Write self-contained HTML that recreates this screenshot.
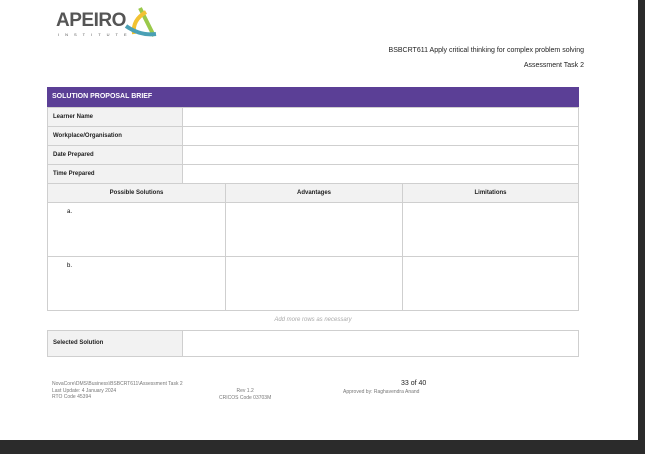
<!DOCTYPE html><html><head><style>
body{margin:0;width:645px;height:454px;background:#2b2b2b;position:relative;overflow:hidden;font-family:"Liberation Sans",sans-serif}
.page{position:absolute;left:0;top:0;width:638px;height:440px;background:#fff}
.a{position:absolute}
.t{font-size:6px;font-weight:bold;color:#222}
.b{border:1px solid #cfcfcf;box-sizing:border-box}
.g{background:#f2f2f2}
.f{font-size:5px;color:#777;line-height:6.5px}
</style></head><body><div class="page">
<div class="a" style="left:56px;top:10px;font-size:19px;font-weight:bold;color:#555;letter-spacing:-0.5px">APEIRO</div>
<div class="a" style="left:58px;top:32px;font-size:4px;color:#555;letter-spacing:6px">INSTITUTE</div>
<svg class="a" style="left:122px;top:4px" width="36" height="38" viewBox="0 0 36 38"><path d="M18 4 L32 32" stroke="#9ac94a" stroke-width="4" fill="none"/><path d="M24 8 Q10 16 12 30" stroke="#f2c232" stroke-width="4" fill="none"/><path d="M4 22 Q18 32 34 30" stroke="#4aa0b5" stroke-width="4" fill="none"/></svg>
<div class="a" style="right:54px;top:47px;font-size:7px;color:#222">BSBCRT611 Apply critical thinking for complex problem solving</div>
<div class="a" style="right:54px;top:62px;font-size:7px;color:#222">Assessment Task 2</div>
<div class="a" style="left:47px;top:87px;width:532px;height:20px;background:#5b3f96;color:#fff;font-size:7px;font-weight:bold;line-height:20px;padding-left:5px;box-sizing:border-box">SOLUTION PROPOSAL BRIEF</div>
<div class="a b g t" style="left:47px;top:107px;width:136px;height:20px;line-height:18px;padding-left:5px">Learner Name</div><div class="a b" style="left:182px;top:107px;width:397px;height:20px"></div>
<div class="a b g t" style="left:47px;top:126px;width:136px;height:20px;line-height:18px;padding-left:5px">Workplace/Organisation</div><div class="a b" style="left:182px;top:126px;width:397px;height:20px"></div>
<div class="a b g t" style="left:47px;top:145px;width:136px;height:20px;line-height:18px;padding-left:5px">Date Prepared</div><div class="a b" style="left:182px;top:145px;width:397px;height:20px"></div>
<div class="a b g t" style="left:47px;top:164px;width:136px;height:20px;line-height:18px;padding-left:5px">Time Prepared</div><div class="a b" style="left:182px;top:164px;width:397px;height:20px"></div>
<div class="a b g t" style="left:47px;top:183px;width:179px;height:20px;line-height:18px;text-align:center">Possible Solutions</div>
<div class="a b g t" style="left:225px;top:183px;width:178px;height:20px;line-height:18px;text-align:center">Advantages</div>
<div class="a b g t" style="left:402px;top:183px;width:177px;height:20px;line-height:18px;text-align:center">Limitations</div>
<div class="a b" style="left:47px;top:202px;width:179px;height:55px;font-size:6px;padding:6px 0 0 19px">a.</div>
<div class="a b" style="left:225px;top:202px;width:178px;height:55px"></div>
<div class="a b" style="left:402px;top:202px;width:177px;height:55px"></div>
<div class="a b" style="left:47px;top:256px;width:179px;height:55px;font-size:6px;padding:6px 0 0 19px">b.</div>
<div class="a b" style="left:225px;top:256px;width:178px;height:55px"></div>
<div class="a b" style="left:402px;top:256px;width:177px;height:55px"></div>
<div class="a" style="left:47px;top:317px;width:532px;text-align:center;font-size:6px;font-style:italic;color:#aaa">Add more rows as necessary</div>
<div class="a b g t" style="left:47px;top:330px;width:136px;height:27px;line-height:25px;padding-left:5px">Selected Solution</div><div class="a b" style="left:182px;top:330px;width:397px;height:27px"></div>
<div class="a f" style="left:52px;top:381px">NovaCore\DMS\Business\BSBCRT611\Assessment Task 2<br>Last Update: 4 January 2024<br>RTO Code 45394</div>
<div class="a f" style="left:219px;top:388px;text-align:center">Rev 1.2<br>CRICOS Code 03703M</div>
<div class="a" style="left:401px;top:380px;font-size:7px;color:#222">33 of 40</div>
<div class="a f" style="left:343px;top:389px">Approved by: Raghavendra Anand</div>
</div></body></html>
